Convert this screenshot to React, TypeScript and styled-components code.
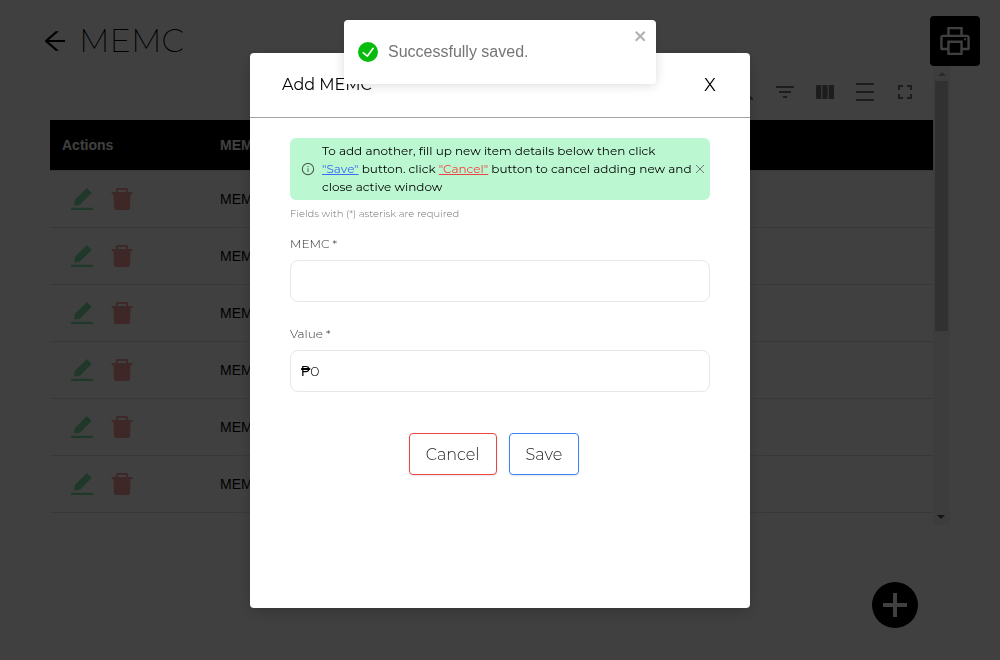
import React, { useState } from "react";
import styled, { createGlobalStyle } from "styled-components";
import {
  AiFillDelete,
  AiFillEdit,
  AiOutlineArrowLeft,
  AiOutlineInfoCircle,
  AiOutlinePrinter,
} from "react-icons/ai";
import {
  MdDensityMedium,
  MdFilterList,
  MdFullscreen,
  MdSearch,
  MdViewColumn,
} from "react-icons/md";

const display = `"Montserrat", "Inter", sans-serif`;
const body = `"Liberation Sans", Arial, sans-serif`;

const GlobalStyle = createGlobalStyle`
  *, *::before, *::after { box-sizing: border-box; }
  body { margin: 0; background: #fff; color: #000; font-family: ${body}; }
  button, input { font: inherit; color: inherit; }
  button { padding: 0; border: 0; background: none; cursor: pointer; }
  svg { display: block; }
`;

const Page = styled.main`
  min-height: 100vh;
`;

const PageHeader = styled.header`
  display: flex;
  align-items: center;
  gap: 10px;
  padding: 16px 20px 0 41px;
`;

const BackButton = styled.button`
  font-size: 28px;
`;

const PageTitle = styled.h1`
  flex: 1;
  margin: 0;
  font-family: ${display};
  font-size: 32px;
  font-weight: 200;
  line-height: 50px;
`;

const PrintButton = styled.button`
  display: grid;
  place-items: center;
  width: 50px;
  height: 50px;
  border-radius: 4px;
  background: #000;
  color: #fff;
  font-size: 36px;
`;

const ListPanel = styled.section`
  display: flex;
  margin: 0 50px;
`;

const ListContent = styled.div`
  flex: 1;
  min-width: 0;
  padding-bottom: 12px;
`;

const Toolbar = styled.div`
  display: flex;
  justify-content: flex-end;
  height: 54px;
  padding: 6px 8px 8px;
`;

const ToolButton = styled.button`
  display: grid;
  place-items: center;
  width: 40px;
  height: 40px;
  color: #757575;
  font-size: 24px;
`;

const Table = styled.table`
  width: 100%;
  border-collapse: separate;
  border-spacing: 0;
  font-size: 14px;
  line-height: 20px;
  text-align: left;
`;

const HeadCell = styled.th<{ $width?: number }>`
  width: ${({ $width }) => ($width ? `${$width}px` : "auto")};
  height: 51px;
  padding: 0 12px;
  border-bottom: 1px solid #e0e0e0;
  background: #000;
  background-clip: padding-box;
  color: #fff;
`;

const Cell = styled.td`
  height: 57px;
  padding: 0 12px;
  border-bottom: 1px solid #e0e0e0;
`;

const RowActions = styled.div`
  display: flex;
  gap: 12px;
  padding-left: 6px;
`;

const RowButton = styled.button<{ $color: string }>`
  color: ${({ $color }) => $color};
  font-size: 28px;
`;

const ScrollTrack = styled.div`
  display: flex;
  flex-direction: column;
  align-items: center;
  width: 17px;
  background: #f1f1f1;
`;

const ScrollThumb = styled.div`
  width: 13px;
  height: 250px;
  margin-bottom: auto;
  background: #c1c1c1;
`;

const ScrollArrow = styled.div<{ $down?: boolean }>`
  display: grid;
  place-items: center;
  width: 17px;
  height: 15px;
  color: ${({ $down }) => ($down ? "#505050" : "#a3a3a3")};
  transform: ${({ $down }) => ($down ? "rotate(180deg)" : "none")};
`;

const AddButton = styled.button`
  position: fixed;
  right: 82px;
  bottom: 32px;
  display: grid;
  place-items: center;
  width: 46px;
  height: 46px;
  border-radius: 50%;
  background: #000;
  color: #fff;
`;

const Backdrop = styled.div`
  position: fixed;
  inset: 0;
  display: flex;
  justify-content: center;
  align-items: flex-start;
  padding: 53px 16px 16px;
  background: rgba(0, 0, 0, 0.75);
`;

const Dialog = styled.div`
  width: 100%;
  max-width: 500px;
  min-height: 555px;
  border-radius: 4px;
  background: #fff;
  box-shadow: 0 4px 16px rgba(0, 0, 0, 0.2);
  font-family: ${display};
`;

const DialogHeader = styled.header`
  display: flex;
  align-items: center;
  justify-content: space-between;
  height: 65px;
  padding: 0 32px;
  border-bottom: 1px solid #a3a3a3;
`;

const DialogTitle = styled.h2`
  margin: 0;
  font-size: 16px;
  font-weight: 400;
  line-height: 24px;
`;

const DialogClose = styled.button`
  width: 16px;
  font-size: 18px;
  line-height: 24px;
`;

const Form = styled.form`
  display: flex;
  flex-direction: column;
  padding: 20px 40px;
`;

const Alert = styled.div`
  display: flex;
  align-items: center;
  padding: 4px 4px 4px 11px;
  border-radius: 6px;
  background: #bbf7d0;
  font-size: 12px;
  line-height: 18px;
`;

const AlertIcon = styled.span`
  margin-right: 7px;
  color: #45594c;
  font-size: 14px;
`;

const AlertText = styled.p`
  flex: 1;
  margin: 0;
  color: #000;
`;

const Keyword = styled.span<{ $color: string }>`
  color: ${({ $color }) => $color};
  text-decoration: underline;
`;

const AlertClose = styled.button`
  padding: 1px;
  color: #6b7d72;
`;

const Hint = styled.p`
  margin: 4px 0 10px;
  color: #737373;
  font-size: 10px;
  font-weight: 300;
  line-height: 20px;
`;

const Field = styled.div`
  display: flex;
  flex-direction: column;
  gap: 6px;
  margin-bottom: 22px;
`;

const Label = styled.label`
  color: #333;
  font-size: 12px;
  font-weight: 300;
  line-height: 20px;
`;

const InputBox = styled.div`
  display: flex;
  align-items: center;
  height: 42px;
  padding: 0 10px;
  border: 1px solid #e5e7eb;
  border-radius: 8px;
  font-size: 14px;
`;

const Prefix = styled.span`
  font-family: ${body};
`;

const Input = styled.input`
  flex: 1;
  min-width: 0;
  padding: 0;
  border: 0;
  outline: 0;
  background: none;
  font-weight: 300;
`;

const FormActions = styled.div`
  display: flex;
  justify-content: center;
  gap: 12px;
  padding: 19px 12px 0 0;
`;

const FormButton = styled.button<{ $color: string }>`
  height: 42px;
  padding: 0 16px;
  border: 1px solid ${({ $color }) => $color};
  border-radius: 4px;
  box-shadow: 0 1px 2px rgba(0, 0, 0, 0.1);
  color: #222;
  font-size: 16px;
  font-weight: 300;
`;

const Toast = styled.div`
  position: fixed;
  top: 20px;
  left: 50%;
  display: flex;
  align-items: center;
  gap: 10px;
  width: 312px;
  min-height: 64px;
  padding: 8px 8px 8px 14px;
  border-radius: 4px;
  background: #fff;
  box-shadow: 0 1px 10px rgba(0, 0, 0, 0.1), 0 2px 15px rgba(0, 0, 0, 0.05);
  color: #757575;
  font-size: 16px;
  line-height: 24px;
  transform: translateX(-50%);
`;

const ToastText = styled.span`
  flex: 1;
`;

const ToastClose = styled.button`
  align-self: flex-start;
  color: #000;
  opacity: 0.3;
`;

const rows = ["MEMC 1", "MEMC 2", "MEMC 3", "MEMC 4", "MEMC 5", "MEMC 6"];

const Triangle = () => (
  <svg width="8" height="4" viewBox="0 0 8 4" fill="currentColor">
    <path d="M4 0l4 4H0z" />
  </svg>
);

export default function App() {
  const [name, setName] = useState("");
  const [value, setValue] = useState("0");

  return (
    <>
      <GlobalStyle />
      <Page>
        <PageHeader>
          <BackButton aria-label="Back">
            <AiOutlineArrowLeft />
          </BackButton>
          <PageTitle>MEMC</PageTitle>
          <PrintButton aria-label="Print">
            <AiOutlinePrinter />
          </PrintButton>
        </PageHeader>

        <ListPanel>
          <ListContent>
            <Toolbar>
              <ToolButton aria-label="Search"><MdSearch /></ToolButton>
              <ToolButton aria-label="Filters"><MdFilterList /></ToolButton>
              <ToolButton aria-label="Columns"><MdViewColumn /></ToolButton>
              <ToolButton aria-label="Density"><MdDensityMedium /></ToolButton>
              <ToolButton aria-label="Full screen"><MdFullscreen /></ToolButton>
            </Toolbar>
            <Table>
              <thead>
                <tr>
                  <HeadCell $width={158}>Actions</HeadCell>
                  <HeadCell>MEMC</HeadCell>
                </tr>
              </thead>
              <tbody>
                {rows.map((row) => (
                  <tr key={row}>
                    <Cell>
                      <RowActions>
                        <RowButton $color="#7fe0a2" aria-label={`Edit ${row}`}>
                          <AiFillEdit />
                        </RowButton>
                        <RowButton $color="#f49a9a" aria-label={`Delete ${row}`}>
                          <AiFillDelete />
                        </RowButton>
                      </RowActions>
                    </Cell>
                    <Cell>{row}</Cell>
                  </tr>
                ))}
              </tbody>
            </Table>
          </ListContent>
          <ScrollTrack aria-hidden="true">
            <ScrollArrow><Triangle /></ScrollArrow>
            <ScrollThumb />
            <ScrollArrow $down><Triangle /></ScrollArrow>
          </ScrollTrack>
        </ListPanel>

        <AddButton aria-label="Add MEMC">
          <svg width="24" height="24" viewBox="0 0 24 24" fill="currentColor">
            <path d="M10 0h4v10h10v4H14v10h-4V14H0v-4h10z" />
          </svg>
        </AddButton>
      </Page>

      <Backdrop>
        <Dialog role="dialog" aria-modal="true" aria-labelledby="dialog-title">
          <DialogHeader>
            <DialogTitle id="dialog-title">Add MEMC</DialogTitle>
            <DialogClose aria-label="Close dialog">X</DialogClose>
          </DialogHeader>
          <Form onSubmit={(event) => event.preventDefault()}>
            <Alert role="note">
              <AlertIcon><AiOutlineInfoCircle /></AlertIcon>
              <AlertText>
                To add another, fill up new item details below then click{" "}
                <Keyword $color="#3b6cf6">"Save"</Keyword> button. click{" "}
                <Keyword $color="#ef4444">"Cancel"</Keyword> button to cancel
                adding new and close active window
              </AlertText>
              <AlertClose type="button" aria-label="Dismiss">
                <svg width="10" height="10" viewBox="0 0 10 10" stroke="currentColor">
                  <path d="M1 1l8 8M9 1l-8 8" />
                </svg>
              </AlertClose>
            </Alert>
            <Hint>Fields with (*) asterisk are required</Hint>
            <Field>
              <Label htmlFor="memc">MEMC *</Label>
              <InputBox>
                <Input id="memc" value={name} onChange={(e) => setName(e.target.value)} />
              </InputBox>
            </Field>
            <Field>
              <Label htmlFor="value">Value *</Label>
              <InputBox>
                <Prefix>₱</Prefix>
                <Input id="value" value={value} onChange={(e) => setValue(e.target.value)} />
              </InputBox>
            </Field>
            <FormActions>
              <FormButton type="button" $color="#ef4444">Cancel</FormButton>
              <FormButton type="submit" $color="#3b82f6">Save</FormButton>
            </FormActions>
          </Form>
        </Dialog>
      </Backdrop>

      <Toast role="alert">
        <svg width="20" height="20" viewBox="0 0 24 24" fill="#07bc0c">
          <path d="M12 0a12 12 0 1012 12A12.014 12.014 0 0012 0zm6.927 8.2l-6.845 9.289a1.011 1.011 0 01-1.43.188l-4.888-3.908a1 1 0 111.25-1.562l4.076 3.261 6.227-8.451a1 1 0 111.61 1.183z" />
        </svg>
        <ToastText>Successfully saved.</ToastText>
        <ToastClose aria-label="Close notification">
          <svg width="14" height="16" viewBox="0 0 14 16" fill="currentColor">
            <path d="M7.71 8.23l3.75 3.75-1.48 1.48-3.75-3.75-3.75 3.75L1 11.98l3.75-3.75L1 4.48 2.48 3l3.75 3.75L9.98 3l1.48 1.48-3.75 3.75z" />
          </svg>
        </ToastClose>
      </Toast>
    </>
  );
}
